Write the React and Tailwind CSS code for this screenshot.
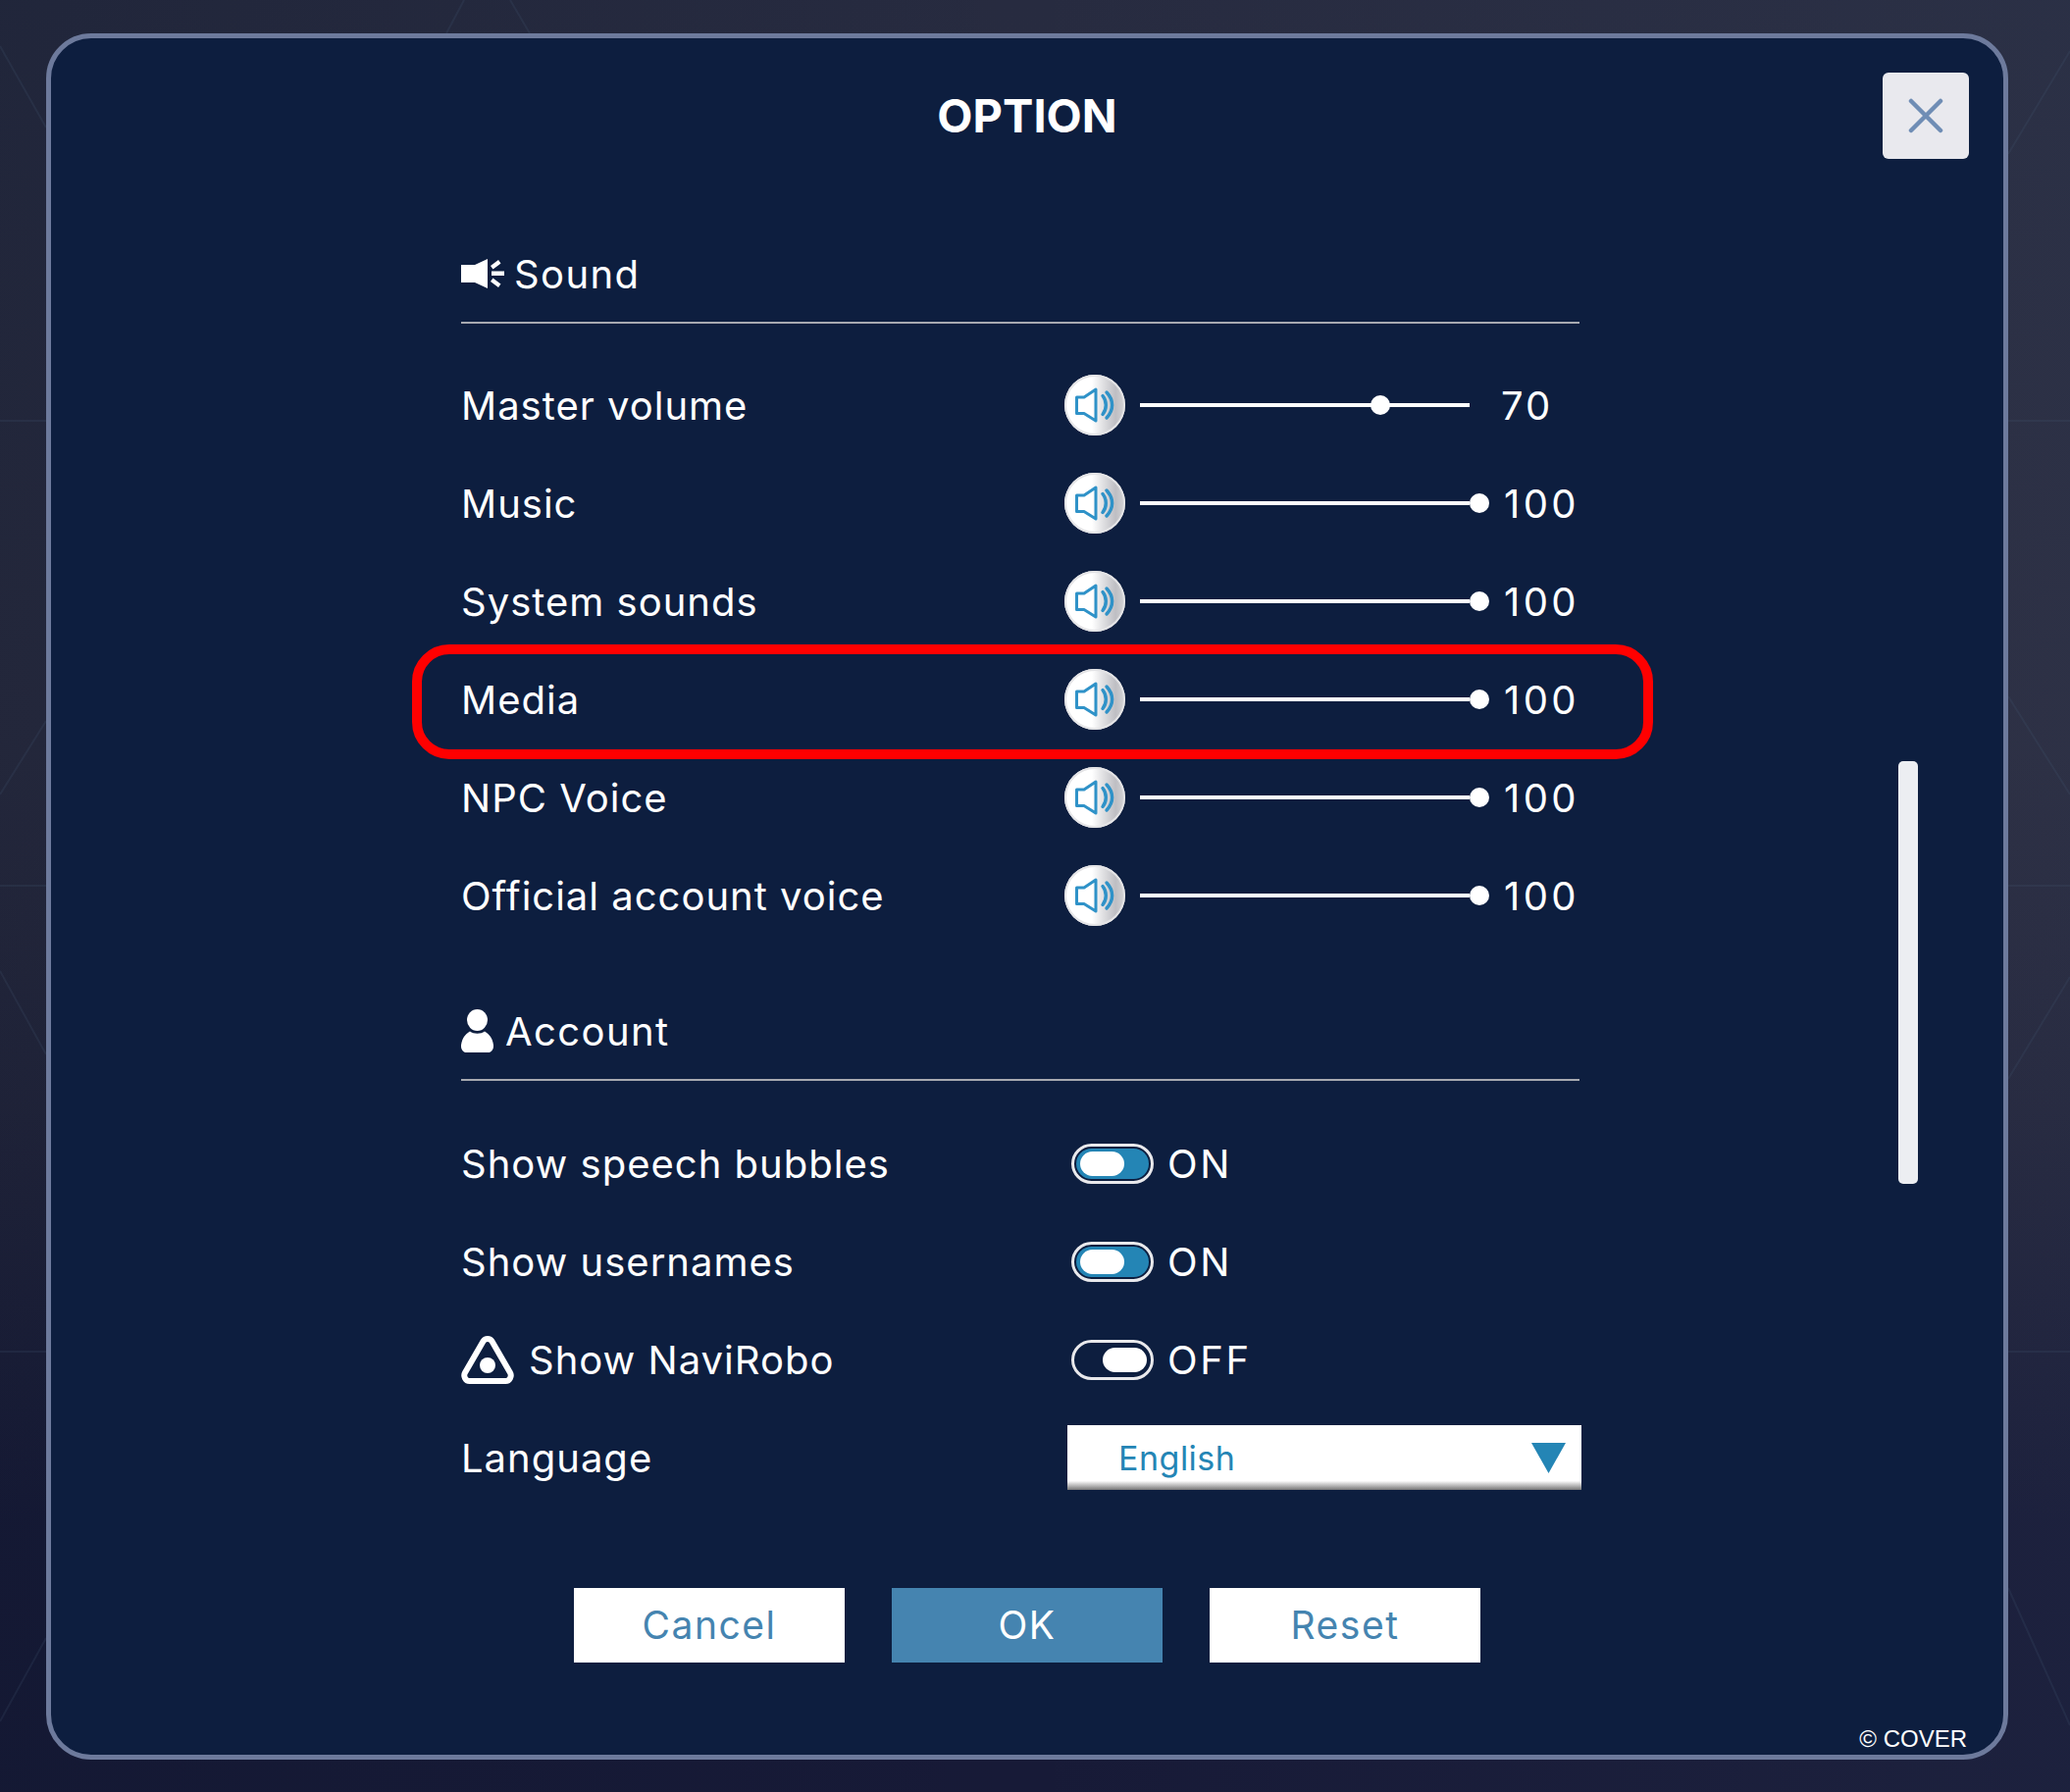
import React from "react";

const FONT = "font-['Inter','Noto_Sans',sans-serif]";

function SpeakerButton() {
  return (
    <div className="w-[62px] h-[62px] shrink-0 rounded-full shadow-[inset_0_0_0_2px_#e4e4e6] bg-[linear-gradient(90deg,#ffffff_0%,#ffffff_45%,#bebec3_84%,#d4d4d6_100%)]">
      <svg viewBox="0 0 62 62" className="w-[62px] h-[62px]" fill="none" stroke="#2f92c8">
        <path d="M12.500 23h7.500L32 15v32L20 39.500h-7.500z" strokeWidth="3" strokeLinejoin="round" />
        <path d="M39 21.500c4.400 5.500 4.400 13.500 0 19" strokeWidth="3.400" strokeLinecap="round" />
        <path d="M43 18c7.500 8 7.500 18 0 26" strokeWidth="3.400" strokeLinecap="round" />
      </svg>
    </div>
  );
}

function Slider({ value }) {
  return (
    <div className="relative w-[336px] h-1 ml-[15px] bg-white shrink-0">
      <div
        className="absolute top-1/2 w-5 h-5 -ml-2.5 -mt-2.5 rounded-full bg-white"
        style={{ left: `${346 + (value - 100) * 3.37}px` }}
      />
    </div>
  );
}

function Row({ label, icon, children }) {
  return (
    <div className="flex items-center h-[100px]">
      <div className="flex items-center w-[615px] shrink-0 text-white text-[40px] tracking-[1px]">
        {icon}
        <span className="pt-[2px]">{label}</span>
      </div>
      {children}
    </div>
  );
}

function SoundRow({ label, value }) {
  return (
    <Row label={label}>
      <SpeakerButton />
      <Slider value={value} />
      <span
        className={
          value === 100
            ? "ml-[35px] pt-[2px] text-white text-[40px] tracking-[3.4px]"
            : "ml-[32px] pt-[2px] text-white text-[40px] tracking-[3px]"
        }
      >
        {value}
      </span>
    </Row>
  );
}

function Toggle({ on }) {
  return (
    <div className="ml-[7px] w-[84px] h-[41px] shrink-0 rounded-full border-[3px] border-[#e9e9ec] p-[2px]">
      <div
        className={
          on
            ? "flex justify-start items-center h-full rounded-full bg-[#2485b5] pl-[4px]"
            : "flex justify-end items-center h-full rounded-full bg-[#0d1e3f] pr-[2px]"
        }
      >
        <div className="w-[45px] h-[25px] rounded-full bg-white" />
      </div>
    </div>
  );
}

function ToggleRow({ label, on, icon }) {
  return (
    <Row label={label} icon={icon}>
      <Toggle on={on} />
      <span className="ml-[14px] pt-[2px] text-white text-[40px] tracking-[2.6px]">{on ? "ON" : "OFF"}</span>
    </Row>
  );
}

function SectionHead({ icon, label, className }) {
  return (
    <div className={`flex items-center h-[100px] border-b-2 border-[#a7a9b0] text-white text-[40px] tracking-[1.4px] ${className}`}>
      {icon}
      <span className="pt-[2px]">{label}</span>
    </div>
  );
}

function Horn() {
  return (
    <svg viewBox="0 0 44 30" className="w-[44px] h-[30px] mr-[10px] shrink-0" fill="#ffffff">
      <path d="M0 6h14L27 0v30L14 24H0z" />
      <path d="M30 7l8-6 2.500 3.500-8 6zM31 12.500h13v4.500H31zM30 23l8 6 2.500-3.500-8-6z" />
    </svg>
  );
}

function Person() {
  return (
    <svg viewBox="0 0 33 44" className="w-[33px] h-[44px] mr-[12px] shrink-0" fill="#ffffff">
      <ellipse cx="16.500" cy="11" rx="10.500" ry="11" />
      <path d="M9 22.500c4 3 11 3 15 0 5 3 8 7 9 14 .4 4-2 7.500-5 7.500H5c-3 0-5.400-3.500-5-7.500 1-7 4-11 9-14z" />
    </svg>
  );
}

function Navi() {
  return (
    <svg viewBox="0 0 54 49" className="w-[54px] h-[49px] mr-[15px] shrink-0" fill="none" stroke="#ffffff">
      <path d="M22.500 5.500c2-3.300 7-3.300 9 0l18.500 32c2 3.500 -.5 8.500-4.500 8.500H8.500c-4 0-6.500-5-4.500-8.500z" strokeWidth="6" strokeLinejoin="round" />
      <circle cx="27" cy="30" r="8" fill="#ffffff" stroke="none" />
    </svg>
  );
}

function ActionButton({ children, primary }) {
  return (
    <div
      className={
        primary
          ? "flex items-center justify-center w-[276px] h-[76px] bg-[#4584b0] text-white text-[39px] tracking-[1.5px]"
          : "flex items-center justify-center w-[276px] h-[76px] bg-white text-[#4584b0] text-[39px] tracking-[1.5px]"
      }
    >
      {children}
    </div>
  );
}

export default function App() {
  return (
    <div className={`relative w-[2110px] h-[1827px] overflow-hidden pt-[34px] pl-[47px] bg-[linear-gradient(180deg,#272b40_0%,#2a2c40_42%,#24263c_62%,#171a37_85%,#171a37_100%)] ${FONT}`}>
      <div className="absolute inset-0 bg-[linear-gradient(90deg,rgba(10,20,40,0.22)_0%,rgba(10,20,40,0)_50%,rgba(70,85,110,0.12)_100%)]" />
      <svg className="absolute inset-0 w-[2110px] h-[1827px]" fill="none" stroke="#4a5f78" strokeOpacity="0.18" strokeWidth="2">
        <path d="M0 47L47 130M47 735L0 810M0 990L47 1075M47 1670L0 1755M0 429H47M0 903H47M0 1378H47" />
        <path d="M2047 157L2110 52M2047 710L2110 810M2047 1100L2110 996M2047 1619L2110 1759M2047 429H2110M2047 903H2110M2047 1378H2110" />
        <path d="M473 0L455 34M520 0L540 34" />
      </svg>

      <div className="relative w-[2000px] h-[1760px] rounded-[46px] border-[5px] border-[#6d7a9c] bg-[#0d1e3f]">
        <div className="absolute left-[1867px] top-[35px] flex items-center justify-center w-[88px] h-[88px] rounded-[6px] bg-[#e9e9ee]">
          <svg viewBox="0 0 36 36" className="w-9 h-9" fill="none" stroke="#6f8db5" strokeWidth="4.500" strokeLinecap="round">
            <path d="M3 3L33 33M33 3L3 33" />
          </svg>
        </div>

        <div className="h-[191px] pt-[39px] text-center text-white text-[47px] font-bold leading-[80px]">OPTION</div>

        <div className="ml-[418px] w-[1140px]">
          <SectionHead icon={<Horn />} label="Sound" className="mb-[33px]" />
          <SoundRow label="Master volume" value={70} />
          <SoundRow label="Music" value={100} />
          <SoundRow label="System sounds" value={100} />
          <SoundRow label="Media" value={100} />
          <SoundRow label="NPC Voice" value={100} />
          <SoundRow label="Official account voice" value={100} />

          <SectionHead icon={<Person />} label="Account" className="mt-[39px] mb-[34px]" />
          <ToggleRow label="Show speech bubbles" on />
          <ToggleRow label="Show usernames" on />
          <ToggleRow label="Show NaviRobo" icon={<Navi />} on={false} />
          <Row label="Language">
            <div className="flex items-center justify-between w-[524px] shrink-0 h-[66px] ml-[3px] pl-[52px] pr-[16px] bg-[linear-gradient(180deg,#ffffff_0%,#ffffff_86%,#777777_100%)] text-[#2485b5] text-[34px] tracking-[0.5px]">
              <span>English</span>
              <svg viewBox="0 0 35 31" className="w-[35px] h-[31px]" fill="#2485b5">
                <path d="M0 0H35L17.500 31z" />
              </svg>
            </div>
          </Row>
        </div>

        <div className="flex justify-center gap-[48px] mt-[83px]">
          <ActionButton>Cancel</ActionButton>
          <ActionButton primary>OK</ActionButton>
          <ActionButton>Reset</ActionButton>
        </div>

        <div className="absolute left-[1883px] top-[737px] w-5 h-[431px] rounded-[5px] bg-[#eceef2]" />
        <div className="absolute right-[37px] bottom-[-2px] text-white text-[24px] font-['Liberation_Sans',sans-serif]">© COVER</div>

        <div className="absolute left-[368px] top-[618px] w-[1265px] h-[117px] rounded-[38px] border-[10px] border-[#ff0000]" />
      </div>
    </div>
  );
}
